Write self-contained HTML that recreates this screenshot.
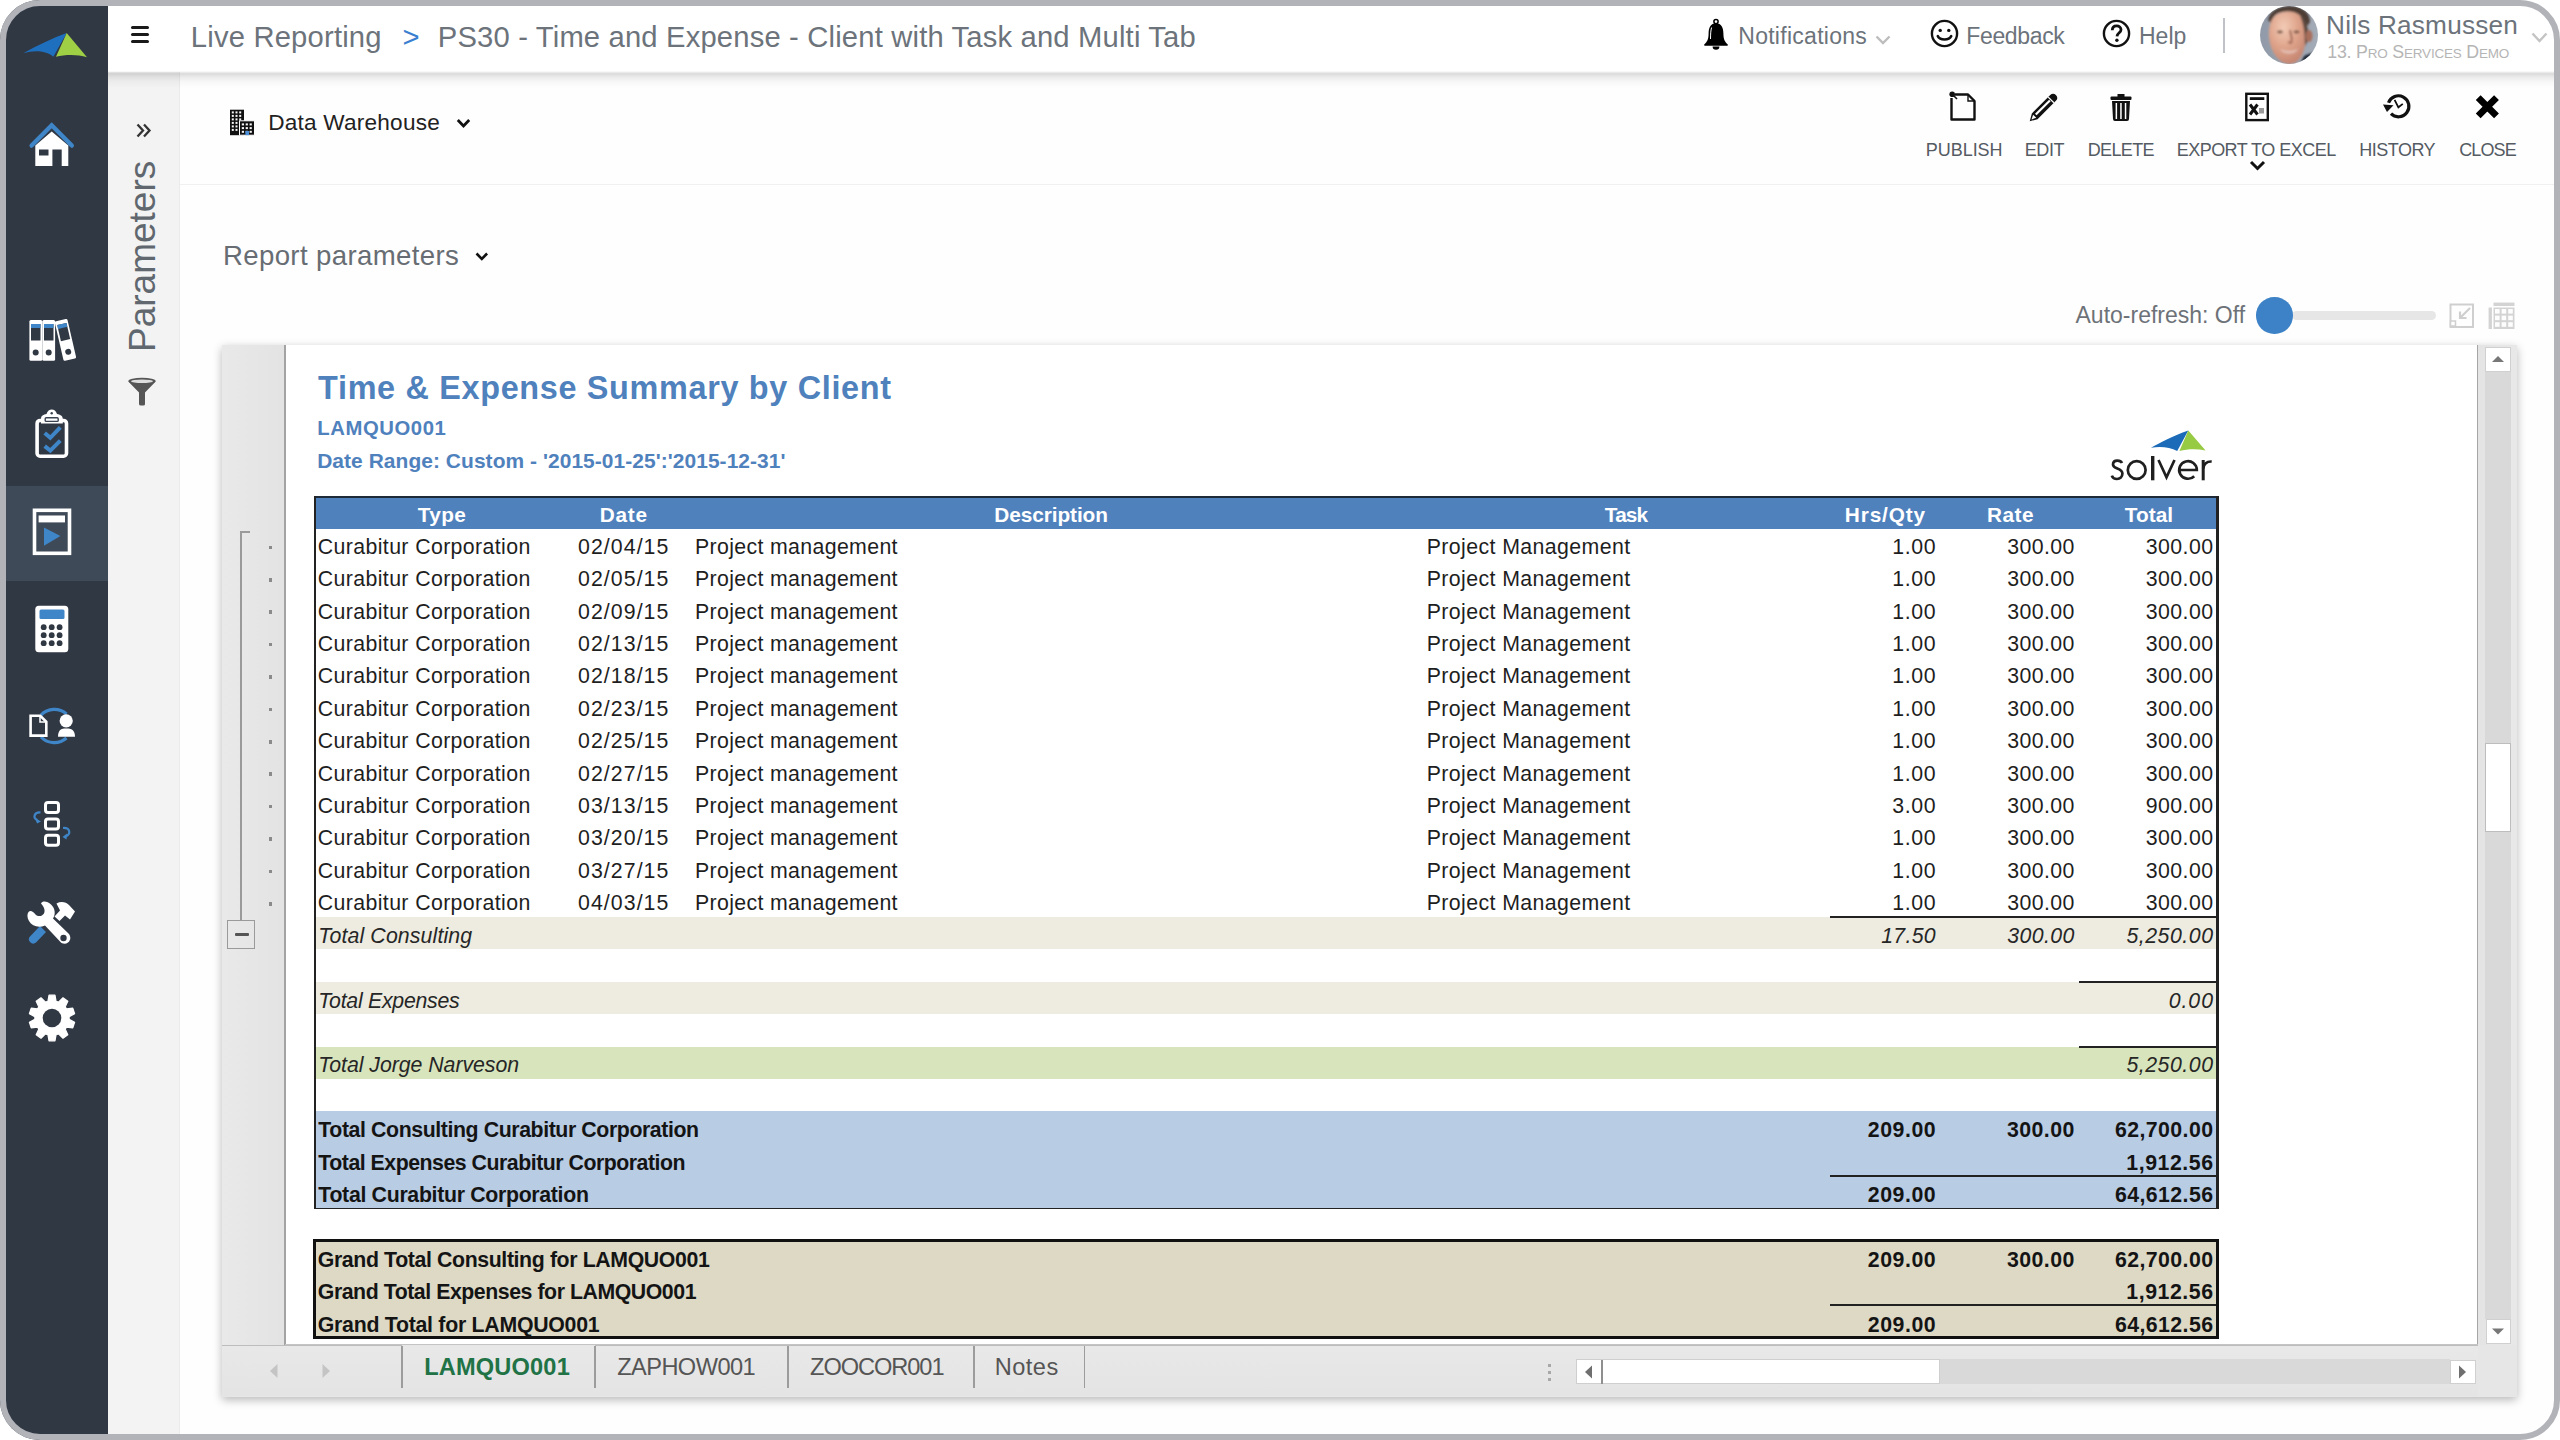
<!DOCTYPE html>
<html><head><meta charset="utf-8"><title>Live Reporting</title>
<style>
html,body{margin:0;padding:0;width:2560px;height:1440px;overflow:hidden;background:#ffffff;font-family:"Liberation Sans",sans-serif;}
#clip{position:absolute;left:0;top:0;width:2560px;height:1440px;border-radius:40px;overflow:hidden;}
#frame{position:absolute;left:0;top:0;width:2560px;height:1440px;box-sizing:border-box;border:6px solid #b1b3b8;border-radius:40px;pointer-events:none;}
svg{overflow:visible}
</style></head><body>
<div id="clip">
<div style="position:absolute;left:0.00px;top:0.00px;width:108.00px;height:1440.00px;background:#303844;"></div>
<div style="position:absolute;left:0.00px;top:486.00px;width:108.00px;height:95.00px;background:#3e4a57;"></div>
<div style="position:absolute;left:108.00px;top:0.00px;width:2452.00px;height:72.00px;background:#ffffff;"></div>
<div style="position:absolute;left:108.00px;top:72.00px;width:71.50px;height:1368.00px;background:#f3f3f3;"></div>
<div style="position:absolute;left:179.00px;top:72.00px;width:1.00px;height:1368.00px;background:#ebebeb;"></div>
<div style="position:absolute;left:180.00px;top:72.00px;width:2380.00px;height:1368.00px;background:#fefefe;"></div>
<div style="position:absolute;left:180.00px;top:183.50px;width:2380.00px;height:1.50px;background:#f0f0f0;"></div>
<div style="position:absolute;left:108.00px;top:71.00px;width:2452.00px;height:17.00px;background:linear-gradient(180deg,rgba(0,0,0,0) 0%,rgba(0,0,0,0.14) 16%,rgba(0,0,0,0.08) 35%,rgba(0,0,0,0.03) 60%,rgba(0,0,0,0) 100%);"></div>
<svg style="position:absolute;left:20px;top:28px;" width="72" height="34" viewBox="0 0 72 34"><path d="M3.3 25.3 C18 17 33 10 46.7 5 L33.3 28.7 C25 22 13 22.5 3.3 25.3 Z" fill="#1f6fbf"/><path d="M46.7 5 L67 29.2 C57 26 45 26.5 36 28.7 Z" fill="#9fcf45"/></svg>
<svg style="position:absolute;left:28px;top:120px;" width="48" height="50" viewBox="0 0 48 50"><path d="M3.6 25.6 L23.7 5.2 L43.8 25.6" fill="none" stroke="#3f86c8" stroke-width="4.3" stroke-linecap="round" stroke-linejoin="miter"/><path d="M7.3 25.5 L23.7 11.5 L40.3 25.5 V46 H33.7 V29.6 H24.4 V46 H7.3 Z M11 29.6 V35.5 H20.5 V29.6 Z" fill="#fff" fill-rule="evenodd"/></svg>
<svg style="position:absolute;left:28px;top:318px;" width="50" height="44" viewBox="0 0 50 44"><rect x="1.4" y="1.9" width="12.9" height="40.9" rx="1.5" fill="#fff"/><rect x="14.3" y="1.9" width="12.8" height="40.9" rx="1.5" fill="#fff"/>
<rect x="3" y="6" width="9.5" height="16.5" fill="#303844"/><rect x="3" y="6" width="9.5" height="4" fill="#3f86c8"/><circle cx="7.7" cy="34.5" r="3" fill="#303844"/>
<rect x="16" y="6" width="9.5" height="16.5" fill="#303844"/><rect x="16" y="6" width="9.5" height="4" fill="#3f86c8"/><circle cx="20.7" cy="34.5" r="3" fill="#303844"/>
<g transform="rotate(-13 38 22)"><rect x="31" y="1.5" width="13" height="40.5" rx="1.5" fill="#fff"/><rect x="32.8" y="5.5" width="9.5" height="16.5" fill="#303844"/><rect x="32.8" y="5.5" width="9.5" height="4" fill="#3f86c8"/><circle cx="37.5" cy="34" r="3" fill="#303844"/></g></svg>
<svg style="position:absolute;left:32px;top:406px;" width="40" height="55" viewBox="0 0 40 55"><rect x="5.1" y="14.5" width="29.4" height="35.7" rx="3" fill="none" stroke="#fff" stroke-width="3.6"/>
<path d="M9 17.5 V13 C9 9.5 11.5 8.5 14.5 8 C15.5 5 17.5 3.6 19.7 3.6 C22 3.6 24 5 25 8 C28 8.5 30.8 9.5 30.8 13 V17.5 Z" fill="#fff"/><rect x="13.2" y="11.8" width="13" height="3.6" rx="1" fill="none" stroke="#3a4350" stroke-width="1.4"/><circle cx="19.7" cy="7.3" r="1.2" fill="#3a4350"/>
<path d="M12.7 26.9 L18.3 31.8 L28.3 21.4" fill="none" stroke="#3f86c8" stroke-width="4"/>
<path d="M12.7 40.1 L18.3 44.6 L28.3 34.6" fill="none" stroke="#3f86c8" stroke-width="4"/></svg>
<svg style="position:absolute;left:30px;top:506px;" width="44" height="52" viewBox="0 0 44 52"><rect x="4.5" y="4.3" width="35" height="43" fill="none" stroke="#fff" stroke-width="3.6"/><rect x="8.6" y="9.5" width="26.4" height="6.9" fill="#fff"/><path d="M14 21.4 V39.7 L30.4 30 Z" fill="#3f86c8"/></svg>
<svg style="position:absolute;left:33px;top:603px;" width="38" height="52" viewBox="0 0 38 52"><rect x="2.3" y="2.7" width="33" height="46.5" rx="3.5" fill="#fff"/><rect x="6.5" y="6.5" width="25" height="9.4" rx="1.5" fill="#3f86c8"/><circle cx="10.7" cy="24.2" r="2.9" fill="#303844"/><circle cx="10.7" cy="32.2" r="2.9" fill="#303844"/><circle cx="10.7" cy="40.2" r="2.9" fill="#303844"/><circle cx="18.7" cy="24.2" r="2.9" fill="#303844"/><circle cx="18.7" cy="32.2" r="2.9" fill="#303844"/><circle cx="18.7" cy="40.2" r="2.9" fill="#303844"/><circle cx="26.6" cy="24.2" r="2.9" fill="#303844"/><circle cx="26.6" cy="32.2" r="2.9" fill="#303844"/><circle cx="26.6" cy="40.2" r="2.9" fill="#303844"/></svg>
<svg style="position:absolute;left:26px;top:703px;" width="54" height="46" viewBox="0 0 54 46"><path d="M15 12 A18.5 18.5 0 0 1 40.5 11" fill="none" stroke="#3f86c8" stroke-width="3.2"/><path d="M15 34 A18.5 18.5 0 0 0 40.5 35" fill="none" stroke="#3f86c8" stroke-width="3.2"/>
<path d="M4.6 12.8 H14.3 L20.3 18.8 V32.6 H4.6 Z" fill="none" stroke="#fff" stroke-width="2.6"/><path d="M14 13 V19 H20" fill="none" stroke="#fff" stroke-width="1.5"/>
<circle cx="40.2" cy="17.8" r="6.6" fill="#fff"/><path d="M32 33.8 C32 27 35 25.5 40.2 25.5 C45.5 25.5 49 27 49 33.8 Z" fill="#fff"/></svg>
<svg style="position:absolute;left:28px;top:798px;" width="50" height="52" viewBox="0 0 50 52"><rect x="17.5" y="4.5" width="13" height="10" rx="2.5" fill="none" stroke="#fff" stroke-width="3"/><rect x="17.5" y="21" width="13" height="10" rx="2.5" fill="none" stroke="#fff" stroke-width="3"/><rect x="17.5" y="37.2" width="13" height="10" rx="2.5" fill="none" stroke="#fff" stroke-width="3"/>
<path d="M12.5 14.5 C6 14 4.5 20 9.5 22" fill="none" stroke="#3f86c8" stroke-width="2.2"/><path d="M7 20 L13 23.5 L9 25.5 Z" fill="#3f86c8"/>
<path d="M35 30 C42 29.5 43.5 36 37.5 38.5" fill="none" stroke="#3f86c8" stroke-width="2.2"/><path d="M39 35.5 L34.5 39 L38.5 41.5 Z" fill="#3f86c8"/></svg>
<svg style="position:absolute;left:26px;top:897px;" width="52" height="48" viewBox="0 0 52 48"><path d="M4 39.5 L14 29 L20 35 L10 45.5 Q7 48 4 45 Q1.5 42 4 39.5 Z" fill="#3f86c8"/>
<path d="M2.5 15 C4.5 13 7 14.5 9.5 17.5 C12 20 16 19.5 18 16.5 C19.5 13.5 18 9.5 15 6.5 C17 3 22 5 25 7.5 C29 11 30 17 27 21.5 L42.5 36.5 C45 39 45 43.5 42 45.5 C39.5 47.5 36 47 34 44.5 L19 28.5 C13 31 6 29.5 3 24 C1 20.5 1 17 2.5 15 Z" fill="#fff"/>
<circle cx="37.5" cy="41" r="3.2" fill="#303844"/>
<path d="M30.5 6.5 C35 4 40 5 43 8 L49 14.5 L44 22.5 L39 18.5 L33.5 24 L28.5 19.5 L34 13.5 C33 11 31.5 9 30.5 6.5 Z" fill="#fff"/></svg>
<svg style="position:absolute;left:26px;top:992px;" width="52" height="52" viewBox="0 0 52 52"><polygon points="23.02,3.19 28.98,3.19 30.09,9.29 32.51,10.08 36.99,5.80 41.82,9.30 39.13,14.89 40.63,16.95 46.77,16.12 48.61,21.79 43.15,24.73 43.15,27.27 48.61,30.21 46.77,35.88 40.63,35.05 39.13,37.11 41.82,42.70 36.99,46.20 32.51,41.92 30.09,42.71 28.98,48.81 23.02,48.81 21.91,42.71 19.49,41.92 15.01,46.20 10.18,42.70 12.87,37.11 11.37,35.05 5.23,35.88 3.39,30.21 8.85,27.27 8.85,24.73 3.39,21.79 5.23,16.12 11.37,16.95 12.87,14.89 10.18,9.30 15.01,5.80 19.49,10.08 21.91,9.29" fill="#fff" stroke="#fff" stroke-width="1.2" stroke-linejoin="round"/><circle cx="26" cy="26" r="9.3" fill="#303844"/></svg>
<div style="position:absolute;left:130.60px;top:26.30px;width:18.20px;height:2.90px;background:#1a1a1a;border-radius:1.5px;"></div>
<div style="position:absolute;left:130.60px;top:33.10px;width:18.20px;height:2.90px;background:#1a1a1a;border-radius:1.5px;"></div>
<div style="position:absolute;left:130.60px;top:40.00px;width:18.20px;height:2.90px;background:#1a1a1a;border-radius:1.5px;"></div>
<div style="position:absolute;top:23.23px;font-size:29.2px;line-height:29.2px;color:#6c737b;font-weight:400;white-space:nowrap;letter-spacing:0.194px;left:190.81px;">Live Reporting</div>
<div style="position:absolute;top:23.23px;font-size:29.2px;line-height:29.2px;color:#3a7fd0;font-weight:400;white-space:nowrap;left:402.42px;">&gt;</div>
<div style="position:absolute;top:23.23px;font-size:29.2px;line-height:29.2px;color:#6c737b;font-weight:400;white-space:nowrap;letter-spacing:0.172px;left:437.81px;">PS30 - Time and Expense - Client with Task and Multi Tab</div>
<svg style="position:absolute;left:1703px;top:18px;" width="26" height="32" viewBox="0 0 26 32"><circle cx="13" cy="3.6" r="2.1" fill="none" stroke="#000" stroke-width="1.5"/><path d="M13 5.2 C7.6 5.2 5.6 9.8 5.6 15.5 C5.6 21.5 4.2 23.6 1.2 26.6 Q0.8 27.8 2 27.8 H24 Q25.2 27.8 24.8 26.6 C21.8 23.6 20.4 21.5 20.4 15.5 C20.4 9.8 18.4 5.2 13 5.2 Z" fill="#000"/><path d="M9.6 28.5 a3.4 3.2 0 0 0 6.8 0 Z" fill="#000"/><path d="M8.6 9.5 C7.6 12.5 7.6 17 7.5 21" stroke="#fff" stroke-width="1" fill="none"/></svg>
<div style="position:absolute;top:25.23px;font-size:23px;line-height:23px;color:#6c737b;font-weight:400;white-space:nowrap;letter-spacing:0.271px;left:1738.28px;">Notifications</div>
<svg style="position:absolute;left:1875px;top:35px;" width="16" height="10" viewBox="0 0 16 10"><path d="M1.5 1.5 L8 8 L14.5 1.5" fill="none" stroke="#bdbdbd" stroke-width="2.4"/></svg>
<svg style="position:absolute;left:1930px;top:19px;" width="29" height="29" viewBox="0 0 29 29"><circle cx="14.5" cy="14.5" r="12.6" fill="none" stroke="#111" stroke-width="2.4"/><circle cx="10.2" cy="11.4" r="1.7" fill="#111"/><circle cx="18.8" cy="11.4" r="1.7" fill="#111"/><path d="M7.8 17.2 C10 21.6 19 21.6 21.2 17.2" fill="none" stroke="#111" stroke-width="2.6" stroke-linecap="round"/></svg>
<div style="position:absolute;top:25.23px;font-size:23px;line-height:23px;color:#6c737b;font-weight:400;white-space:nowrap;letter-spacing:-0.354px;left:1966.28px;">Feedback</div>
<svg style="position:absolute;left:2102px;top:19px;" width="29" height="29" viewBox="0 0 29 29"><circle cx="14.5" cy="14.5" r="12.6" fill="none" stroke="#111" stroke-width="2.4"/><path d="M10.3 11.2 C10.3 8.3 12.2 6.9 14.6 6.9 C17.2 6.9 19 8.5 19 10.8 C19 13.6 15.4 14 15 17.3" fill="none" stroke="#111" stroke-width="2.8"/><circle cx="14.9" cy="21.3" r="1.7" fill="#111"/></svg>
<div style="position:absolute;top:25.23px;font-size:23px;line-height:23px;color:#6c737b;font-weight:400;white-space:nowrap;letter-spacing:0.075px;left:2138.88px;">Help</div>
<div style="position:absolute;left:2222.50px;top:18.00px;width:2.00px;height:35.00px;background:#bfc3c7;"></div>
<svg style="position:absolute;left:2260px;top:6px;" width="58" height="58" viewBox="0 0 58 58"><defs><clipPath id="av"><circle cx="29" cy="29" r="29"/></clipPath>
<radialGradient id="face" cx="40%" cy="30%" r="70%"><stop offset="0" stop-color="#f2cbb6"/><stop offset="0.55" stop-color="#dfa48b"/><stop offset="1" stop-color="#c68772"/></radialGradient>
<linearGradient id="bg" x1="0" y1="0" x2="1" y2="0"><stop offset="0" stop-color="#909aa8"/><stop offset="1" stop-color="#a3abb7"/></linearGradient>
<filter id="bl" x="-10%" y="-10%" width="120%" height="120%"><feGaussianBlur stdDeviation="0.9"/></filter></defs>
<g clip-path="url(#av)"><rect width="58" height="58" fill="url(#bg)"/><g filter="url(#bl)">
<path d="M8 14 C10 4 20 0 30 0 C42 0 50 6 50 16 L47 20 C44 10 36 5.5 27 5.5 C18 5.5 13 9 11 17 Z" fill="#4d3d35"/>
<path d="M9 30 C8 14 15 5.5 28 5.5 C39 5.5 46 12 46 28 C46 44 40 58 30 58 C19 58 10 46 9 30 Z" fill="url(#face)"/>
<path d="M40 10 C47 14 49 24 48 34 L45 40 C45 28 44 18 40 10 Z" fill="#5b473d"/>
<ellipse cx="49" cy="30" rx="3.5" ry="6" fill="#a86e5c"/>
<ellipse cx="20" cy="26" rx="3" ry="1.4" fill="#7d5a4b"/><ellipse cx="36.5" cy="26" rx="3" ry="1.4" fill="#7d5a4b"/>
<path d="M30 24 C31 30 33 35 31 37 L28 36" fill="none" stroke="#a8705d" stroke-width="2.2"/>
<path d="M20 43 C25 45.5 34 45.5 38.5 42.5 C36 46.5 33 47.5 29 47.5 C24.5 47.5 21.5 46 20 43 Z" fill="#e3bfb4"/>
<path d="M44 50 C48 48 54 46 58 47 V58 H40 Z" fill="#1f2734"/></g></g></svg>
<div style="position:absolute;top:12.27px;font-size:26.2px;line-height:26.2px;color:#6c737b;font-weight:400;white-space:nowrap;letter-spacing:0.201px;left:2326.03px;">Nils Rasmussen</div>
<div style="position:absolute;top:44.38px;font-size:17.8px;line-height:17.8px;color:#b5b5b5;font-weight:400;white-space:nowrap;letter-spacing:-0.200px;left:2327.20px;">13. P<span style="font-size:13.5px">RO</span> S<span style="font-size:13.5px">ERVICES</span> D<span style="font-size:13.5px">EMO</span></div>
<svg style="position:absolute;left:2531px;top:32px;" width="17" height="12" viewBox="0 0 17 12"><path d="M1.5 1.5 L8.5 9 L15.5 1.5" fill="none" stroke="#c4c4c4" stroke-width="2.4"/></svg>
<svg style="position:absolute;left:136px;top:123px;" width="16" height="15" viewBox="0 0 16 15"><path d="M1.5 1.5 L7 7.5 L1.5 13.5 M8 1.5 L13.5 7.5 L8 13.5" fill="none" stroke="#333" stroke-width="2.3"/></svg>
<div style="position:absolute;left:155px;top:351.5px;transform-origin:0 0;transform:rotate(-90deg);font-size:37px;line-height:37px;color:#60676e;white-space:nowrap;"><span style="position:relative;top:-31.3px">Parameters</span></div>
<svg style="position:absolute;left:127px;top:377px;" width="30" height="29" viewBox="0 0 30 29"><ellipse cx="15" cy="4" rx="13.7" ry="3.2" fill="#555"/><path d="M1.3 4.5 L12 15.5 V27 Q12 28.5 14 28.5 H16.5 Q18 28.5 18 27 V15.5 L28.7 4.5 Z" fill="#555"/><ellipse cx="15" cy="4.2" rx="11" ry="1.8" fill="#ddd"/></svg>
<svg style="position:absolute;left:229px;top:109px;" width="27" height="27" viewBox="0 0 27 27"><rect x="1" y="0.7" width="14" height="25.5" fill="#111"/><rect x="2.8" y="2.4" width="2" height="2" fill="#f8f8f8"/><rect x="2.8" y="5.9" width="2" height="2" fill="#f8f8f8"/><rect x="2.8" y="9.4" width="2" height="2" fill="#f8f8f8"/><rect x="2.8" y="12.9" width="2" height="2" fill="#f8f8f8"/><rect x="2.8" y="16.4" width="2" height="2" fill="#f8f8f8"/><rect x="2.8" y="19.9" width="2" height="2" fill="#f8f8f8"/><rect x="6.5" y="2.4" width="2" height="2" fill="#f8f8f8"/><rect x="6.5" y="5.9" width="2" height="2" fill="#f8f8f8"/><rect x="6.5" y="9.4" width="2" height="2" fill="#f8f8f8"/><rect x="6.5" y="12.9" width="2" height="2" fill="#f8f8f8"/><rect x="6.5" y="16.4" width="2" height="2" fill="#f8f8f8"/><rect x="6.5" y="19.9" width="2" height="2" fill="#f8f8f8"/><rect x="10.2" y="2.4" width="2" height="2" fill="#f8f8f8"/><rect x="10.2" y="5.9" width="2" height="2" fill="#f8f8f8"/><rect x="10.2" y="9.4" width="2" height="2" fill="#f8f8f8"/><rect x="10.2" y="12.9" width="2" height="2" fill="#f8f8f8"/><rect x="10.2" y="16.4" width="2" height="2" fill="#f8f8f8"/><rect x="10.2" y="19.9" width="2" height="2" fill="#f8f8f8"/><rect x="10.5" y="11.8" width="15" height="14.4" fill="#111" stroke="#fefefe" stroke-width="1"/><rect x="12.8" y="14.4" width="2.2" height="2" fill="#f8f8f8"/><rect x="12.8" y="18.1" width="2.2" height="2" fill="#f8f8f8"/><rect x="12.8" y="21.8" width="2.2" height="2" fill="#f8f8f8"/><rect x="16.7" y="14.4" width="2.2" height="2" fill="#f8f8f8"/><rect x="16.7" y="18.1" width="2.2" height="2" fill="#f8f8f8"/><rect x="16.7" y="21.8" width="2.2" height="2" fill="#f8f8f8"/><rect x="20.6" y="14.4" width="2.2" height="2" fill="#f8f8f8"/><rect x="20.6" y="18.1" width="2.2" height="2" fill="#f8f8f8"/><rect x="20.6" y="21.8" width="2.2" height="2" fill="#f8f8f8"/><rect x="16.4" y="22" width="3.6" height="4.2" fill="#4a8fd8"/></svg>
<div style="position:absolute;top:112.37px;font-size:22.6px;line-height:22.6px;color:#222;font-weight:400;white-space:nowrap;letter-spacing:0.210px;left:268.31px;">Data Warehouse</div>
<svg style="position:absolute;left:456px;top:118px;" width="15" height="11" viewBox="0 0 15 11"><path d="M1.8 2 L7.5 8 L13.2 2" fill="none" stroke="#111" stroke-width="2.8"/></svg>
<svg style="position:absolute;left:1948px;top:90px;" width="30" height="32" viewBox="0 0 30 32"><path d="M7 4.5 H20 L26.5 11 V29.5 H3.5 V8" fill="none" stroke="#111" stroke-width="2.4" stroke-linejoin="round"/><path d="M20 4.5 V11 H26.5" fill="none" stroke="#111" stroke-width="1.4"/><circle cx="4.2" cy="4.3" r="2.8" fill="#111"/><path d="M4.5 4.5 L9 9" stroke="#111" stroke-width="1.6"/></svg>
<div style="position:absolute;top:141.06px;font-size:18px;line-height:18px;color:#545b63;font-weight:400;white-space:nowrap;letter-spacing:-0.008px;left:1925.65px;">PUBLISH</div>
<svg style="position:absolute;left:2031px;top:90px;" width="30" height="30" viewBox="0 0 30 30"><g transform="rotate(-45 15 15)"><path d="M-1 11 H25 Q29 11 29 15 Q29 19 25 19 H-1 L-8 15 Z" fill="#111"/><rect x="1" y="13.4" width="20" height="2.2" fill="#fff"/><path d="M-5.5 15 L-1 12.8 V17.2 Z" fill="#fff"/><rect x="21.5" y="11" width="1.3" height="8" fill="#fff"/></g></svg>
<div style="position:absolute;top:141.06px;font-size:18px;line-height:18px;color:#545b63;font-weight:400;white-space:nowrap;letter-spacing:-0.341px;left:2024.65px;">EDIT</div>
<svg style="position:absolute;left:2109px;top:93px;" width="24" height="29" viewBox="0 0 24 29"><rect x="1.5" y="3.5" width="21" height="3.4" rx="1" fill="#111"/><rect x="8.5" y="1" width="7" height="3" fill="#111"/><path d="M3 8 H21 L20 26 Q20 28 18 28 H6 Q4 28 4 26 Z" fill="#111"/><g fill="#fff"><rect x="6.6" y="10" width="1.5" height="16"/><rect x="11.2" y="10" width="1.5" height="16"/><rect x="15.8" y="10" width="1.5" height="16"/></g></svg>
<div style="position:absolute;top:141.06px;font-size:18px;line-height:18px;color:#545b63;font-weight:400;white-space:nowrap;letter-spacing:-0.609px;left:2087.65px;">DELETE</div>
<svg style="position:absolute;left:2243px;top:91px;" width="28" height="31" viewBox="0 0 28 31"><rect x="3.3" y="2.8" width="21.5" height="26.3" fill="none" stroke="#111" stroke-width="2.4"/><rect x="6.8" y="6.2" width="14.5" height="2.8" fill="#111"/><path d="M7 13.5 L14.5 23.5 M14.5 13.5 L7 23.5" stroke="#111" stroke-width="3"/><rect x="16" y="17" width="5" height="5.5" fill="#999"/></svg>
<div style="position:absolute;top:141.06px;font-size:18px;line-height:18px;color:#545b63;font-weight:400;white-space:nowrap;letter-spacing:-0.511px;left:2176.65px;">EXPORT TO EXCEL</div>
<svg style="position:absolute;left:2249px;top:160px;" width="17" height="12" viewBox="0 0 17 12"><path d="M2 2 L8.5 8.5 L15 2" fill="none" stroke="#111" stroke-width="3"/></svg>
<svg style="position:absolute;left:2383px;top:92px;" width="30" height="30" viewBox="0 0 30 30"><path d="M7.98 21.72 A10.5 10.5 0 1 0 5.53 10.71" fill="none" stroke="#111" stroke-width="3.2"/><path d="M0 12.6 L10.5 13.2 L4 20 Z" fill="#111"/><path d="M11.6 7.8 L15.4 15.3 L19.8 11.9" fill="none" stroke="#111" stroke-width="1.8"/></svg>
<div style="position:absolute;top:141.06px;font-size:18px;line-height:18px;color:#545b63;font-weight:400;white-space:nowrap;letter-spacing:-0.496px;left:2359.25px;">HISTORY</div>
<svg style="position:absolute;left:2473px;top:92px;" width="28" height="28" viewBox="0 0 28 28"><path d="M5.2 5.6 L23.5 23.9 M23.5 5.6 L5.2 23.9" stroke="#000" stroke-width="6.8"/></svg>
<div style="position:absolute;top:141.06px;font-size:18px;line-height:18px;color:#545b63;font-weight:400;white-space:nowrap;letter-spacing:-0.861px;left:2459.19px;">CLOSE</div>
<div style="position:absolute;top:241.74px;font-size:27.6px;line-height:27.6px;color:#676d73;font-weight:400;white-space:nowrap;letter-spacing:0.371px;left:222.93px;">Report parameters</div>
<svg style="position:absolute;left:475px;top:252px;" width="14" height="9" viewBox="0 0 14 9"><path d="M1.5 1.5 L6.8 6.8 L12.1 1.5" fill="none" stroke="#111" stroke-width="2.6"/></svg>
<div style="position:absolute;top:303.73px;font-size:23px;line-height:23px;color:#6d7278;font-weight:400;white-space:nowrap;letter-spacing:-0.004px;left:2075.54px;">Auto-refresh: Off</div>
<div style="position:absolute;left:2292.00px;top:311.00px;width:144.00px;height:9.00px;background:#e6e6e6;border-radius:5px;"></div>
<div style="position:absolute;left:2256.00px;top:297.00px;width:36.50px;height:36.50px;background:#3d82c6;border-radius:50%;"></div>
<svg style="position:absolute;left:2449px;top:303px;" width="26" height="26" viewBox="0 0 26 26"><rect x="1.5" y="1.5" width="22.5" height="22.5" fill="none" stroke="#cfcfcf" stroke-width="2"/><rect x="1.5" y="18" width="5" height="5" fill="#fdfdfd" stroke="#cfcfcf" stroke-width="1.5"/><path d="M21 5 L11 15 M11 8.5 V15 H17.5" fill="none" stroke="#cfcfcf" stroke-width="2.2"/></svg>
<svg style="position:absolute;left:2488px;top:302px;" width="27" height="28" viewBox="0 0 27 28"><g fill="#d3d3d3"><rect x="0.6" y="5.5" width="3.3" height="21.5"/><rect x="5.5" y="0.6" width="21" height="3.4"/><rect x="5.5" y="5.5" width="21" height="21.5"/></g><g fill="#fdfdfd"><rect x="7.0" y="7.0" width="4.6" height="4.6"/><rect x="7.0" y="13.6" width="4.6" height="4.6"/><rect x="7.0" y="20.2" width="4.6" height="4.6"/><rect x="13.6" y="7.0" width="4.6" height="4.6"/><rect x="13.6" y="13.6" width="4.6" height="4.6"/><rect x="13.6" y="20.2" width="4.6" height="4.6"/><rect x="20.2" y="7.0" width="4.6" height="4.6"/><rect x="20.2" y="13.6" width="4.6" height="4.6"/><rect x="20.2" y="20.2" width="4.6" height="4.6"/></g></svg>
<div style="position:absolute;left:222.00px;top:345.00px;width:2295.00px;height:1052.00px;background:#e6e6e6;box-shadow:0 3px 9px rgba(0,0,0,0.28);"></div>
<div style="position:absolute;left:222.00px;top:345.00px;width:62.00px;height:1000.00px;background:linear-gradient(90deg,#e9e9e9,#e3e3e3);"></div>
<div style="position:absolute;left:284.00px;top:345.00px;width:1.50px;height:1000.00px;background:#a3a3a3;"></div>
<div style="position:absolute;left:285.50px;top:345.00px;width:2191.50px;height:999.50px;background:#ffffff;"></div>
<div style="position:absolute;left:2477.00px;top:345.00px;width:1.00px;height:1000.00px;background:#a6a6a6;"></div>
<div style="position:absolute;left:285.00px;top:1344.20px;width:2193.00px;height:1.00px;background:#c4c4c4;"></div>
<div style="position:absolute;left:2478.00px;top:345.00px;width:39.00px;height:1000.00px;background:linear-gradient(90deg,#e4e4e4,#e8e8e8);"></div>
<div style="position:absolute;left:2485.00px;top:372.00px;width:25.60px;height:946.70px;background:#d9d9d9;"></div>
<div style="position:absolute;left:2485.00px;top:347.00px;width:26.00px;height:25.00px;background:#fff;border:1px solid #d0d0d0;box-sizing:border-box;"></div>
<svg style="position:absolute;left:2490px;top:353px;" width="16" height="12" viewBox="0 0 16 12"><path d="M2 9 L8 3 L14 9 Z" fill="#777"/></svg>
<div style="position:absolute;left:2485.50px;top:1318.70px;width:25.00px;height:25.30px;background:#fff;border:1px solid #d0d0d0;box-sizing:border-box;"></div>
<svg style="position:absolute;left:2490px;top:1326px;" width="16" height="12" viewBox="0 0 16 12"><path d="M2 2.5 L8 8.5 L14 2.5 Z" fill="#777"/></svg>
<div style="position:absolute;left:2485.00px;top:743.00px;width:25.60px;height:89.00px;background:#fff;border:1px solid #bdbdbd;box-sizing:border-box;"></div>
<div style="position:absolute;left:222.00px;top:1345.60px;width:2256.00px;height:50.90px;background:linear-gradient(180deg,#e8e8e8,#e4e4e4);"></div>
<div style="position:absolute;left:222.00px;top:1345.00px;width:179.50px;height:1.20px;background:#bdbdbd;"></div>
<div style="position:absolute;left:595.00px;top:1345.00px;width:1883.00px;height:1.20px;background:#bdbdbd;"></div>
<svg style="position:absolute;left:268px;top:1362px;" width="12" height="18" viewBox="0 0 12 18"><path d="M9.5 2 L2 9 L9.5 16 Z" fill="#c4c4c4"/></svg>
<svg style="position:absolute;left:320px;top:1362px;" width="12" height="18" viewBox="0 0 12 18"><path d="M2.5 2 L10 9 L2.5 16 Z" fill="#c4c4c4"/></svg>
<div style="position:absolute;left:401.30px;top:1346.00px;width:1.60px;height:42.00px;background:#9c9c9c;"></div>
<div style="position:absolute;left:594.00px;top:1346.00px;width:1.60px;height:42.00px;background:#9c9c9c;"></div>
<div style="position:absolute;left:787.00px;top:1346.00px;width:1.60px;height:42.00px;background:#9c9c9c;"></div>
<div style="position:absolute;left:973.00px;top:1346.00px;width:1.60px;height:42.00px;background:#9c9c9c;"></div>
<div style="position:absolute;left:1083.50px;top:1346.00px;width:1.60px;height:42.00px;background:#9c9c9c;"></div>
<div style="position:absolute;top:1356.32px;font-size:23.6px;line-height:23.6px;color:#217346;font-weight:700;white-space:nowrap;letter-spacing:0.168px;left:424.23px;">LAMQUO001</div>
<div style="position:absolute;top:1356.32px;font-size:23.6px;line-height:23.6px;color:#555;font-weight:400;white-space:nowrap;letter-spacing:-0.544px;left:617.13px;">ZAPHOW001</div>
<div style="position:absolute;top:1356.32px;font-size:23.6px;line-height:23.6px;color:#555;font-weight:400;white-space:nowrap;letter-spacing:-1.044px;left:810.03px;">ZOOCOR001</div>
<div style="position:absolute;top:1356.32px;font-size:23.6px;line-height:23.6px;color:#555;font-weight:400;white-space:nowrap;letter-spacing:0.486px;left:994.63px;">Notes</div>
<div style="position:absolute;left:1547.50px;top:1364.30px;width:3.00px;height:3.00px;background:#a8a8a8;"></div>
<div style="position:absolute;left:1547.50px;top:1371.30px;width:3.00px;height:3.00px;background:#a8a8a8;"></div>
<div style="position:absolute;left:1547.50px;top:1378.30px;width:3.00px;height:3.00px;background:#a8a8a8;"></div>
<div style="position:absolute;left:1601.60px;top:1359.00px;width:848.80px;height:25.40px;background:#d9d9d9;"></div>
<div style="position:absolute;left:1576.00px;top:1359.00px;width:364.00px;height:25.40px;background:#fff;border:1px solid #cfcfcf;box-sizing:border-box;"></div>
<div style="position:absolute;left:1601.00px;top:1360.00px;width:1.50px;height:24.00px;background:#8f8f8f;"></div>
<svg style="position:absolute;left:1581px;top:1363px;" width="14" height="18" viewBox="0 0 14 18"><path d="M11 2.5 L4 9 L11 15.5 Z" fill="#6f6f6f"/></svg>
<div style="position:absolute;left:2450.40px;top:1359.50px;width:25.60px;height:24.90px;background:#fff;border:1px solid #d0d0d0;box-sizing:border-box;"></div>
<svg style="position:absolute;left:2456px;top:1363px;" width="14" height="18" viewBox="0 0 14 18"><path d="M3 2.5 L10 9 L3 15.5 Z" fill="#6f6f6f"/></svg>
<div style="position:absolute;top:371.97px;font-size:32.4px;line-height:32.4px;color:#4f81bd;font-weight:700;white-space:nowrap;letter-spacing:0.673px;left:318.10px;">Time &amp; Expense Summary by Client</div>
<div style="position:absolute;top:418.02px;font-size:20.3px;line-height:20.3px;color:#4f81bd;font-weight:700;white-space:nowrap;letter-spacing:0.582px;left:317.23px;">LAMQUO001</div>
<div style="position:absolute;top:450.77px;font-size:20.95px;line-height:20.95px;color:#4f81bd;font-weight:700;white-space:nowrap;letter-spacing:0.060px;left:317.18px;">Date Range: Custom - '2015-01-25':'2015-12-31'</div>
<svg style="position:absolute;left:2145px;top:426px;" width="66" height="30" viewBox="0 0 66 30"><path d="M6 21.8 C15 17 28 10 43.3 4.6 L32.2 25 C25 21 15 20 6 21.8 Z" fill="#1b6bb8"/><path d="M43.3 4.6 L60.6 24.6 C52 22.5 43 22.8 34.4 25 Z" fill="#98cb44"/></svg>
<svg style="position:absolute;left:2108px;top:452px;" width="108" height="32" viewBox="0 0 108 32"><g fill="none" stroke="#1f1f1f" stroke-width="2.7"><path d="M14 11 C13 9 11.3 8.6 9.4 8.6 C6.6 8.6 5 10.3 5 12.5 C5 17.6 14.4 15.4 14.4 21.6 C14.4 25 12 27 9 27 C6.5 27 4.6 25.8 3.8 23.6"/><circle cx="28.7" cy="18" r="8.9"/><path d="M50.5 8 L58.5 25.2 L66.5 8"/><path d="M71.3 18 H88.8 A8.8 8.8 0 1 0 86.2 24.2"/><path d="M95.2 16.5 C96 11.5 99 9.3 103.7 9.5"/></g><rect x="43" y="4" width="3.4" height="24.3" fill="#1f1f1f"/><rect x="93.7" y="8" width="3" height="20.3" fill="#1f1f1f"/></svg>
<div style="position:absolute;left:239.80px;top:531.70px;width:2.00px;height:388.30px;background:#9a9a9a;"></div>
<div style="position:absolute;left:239.80px;top:531.00px;width:10.70px;height:2.00px;background:#9a9a9a;"></div>
<div style="position:absolute;left:226.60px;top:920.00px;width:28.80px;height:29.00px;border:1.6px solid #9a9a9a;box-sizing:border-box;"></div>
<div style="position:absolute;left:234.60px;top:932.60px;width:14.60px;height:3.60px;background:#555;border-radius:1px;"></div>
<div style="position:absolute;left:269.00px;top:545.50px;width:3.40px;height:3.60px;background:#8a8a8a;"></div>
<div style="position:absolute;left:269.00px;top:577.92px;width:3.40px;height:3.60px;background:#8a8a8a;"></div>
<div style="position:absolute;left:269.00px;top:610.34px;width:3.40px;height:3.60px;background:#8a8a8a;"></div>
<div style="position:absolute;left:269.00px;top:642.76px;width:3.40px;height:3.60px;background:#8a8a8a;"></div>
<div style="position:absolute;left:269.00px;top:675.18px;width:3.40px;height:3.60px;background:#8a8a8a;"></div>
<div style="position:absolute;left:269.00px;top:707.60px;width:3.40px;height:3.60px;background:#8a8a8a;"></div>
<div style="position:absolute;left:269.00px;top:740.02px;width:3.40px;height:3.60px;background:#8a8a8a;"></div>
<div style="position:absolute;left:269.00px;top:772.44px;width:3.40px;height:3.60px;background:#8a8a8a;"></div>
<div style="position:absolute;left:269.00px;top:804.86px;width:3.40px;height:3.60px;background:#8a8a8a;"></div>
<div style="position:absolute;left:269.00px;top:837.28px;width:3.40px;height:3.60px;background:#8a8a8a;"></div>
<div style="position:absolute;left:269.00px;top:869.70px;width:3.40px;height:3.60px;background:#8a8a8a;"></div>
<div style="position:absolute;left:269.00px;top:902.12px;width:3.40px;height:3.60px;background:#8a8a8a;"></div>
<div style="position:absolute;left:314.00px;top:495.50px;width:1904.50px;height:33.50px;background:#4f81bd;"></div>
<div style="position:absolute;left:314.00px;top:495.50px;width:1904.50px;height:2.50px;background:#1f2a38;"></div>
<div style="position:absolute;top:505.09px;font-size:20.8px;line-height:20.8px;color:#fff;font-weight:700;white-space:nowrap;letter-spacing:0.428px;left:-558.20px;width:2000px;text-align:center;text-indent:0.428px;">Type</div>
<div style="position:absolute;top:505.09px;font-size:20.8px;line-height:20.8px;color:#fff;font-weight:700;white-space:nowrap;letter-spacing:0.801px;left:-376.60px;width:2000px;text-align:center;text-indent:0.801px;">Date</div>
<div style="position:absolute;top:505.09px;font-size:20.8px;line-height:20.8px;color:#fff;font-weight:700;white-space:nowrap;letter-spacing:-0.073px;left:51.10px;width:2000px;text-align:center;text-indent:-0.073px;">Description</div>
<div style="position:absolute;top:505.09px;font-size:20.8px;line-height:20.8px;color:#fff;font-weight:700;white-space:nowrap;letter-spacing:-0.860px;left:626.50px;width:2000px;text-align:center;text-indent:-0.860px;">Task</div>
<div style="position:absolute;top:505.09px;font-size:20.8px;line-height:20.8px;color:#fff;font-weight:700;white-space:nowrap;letter-spacing:0.859px;left:885.00px;width:2000px;text-align:center;text-indent:0.859px;">Hrs/Qty</div>
<div style="position:absolute;top:505.09px;font-size:20.8px;line-height:20.8px;color:#fff;font-weight:700;white-space:nowrap;letter-spacing:0.568px;left:1010.30px;width:2000px;text-align:center;text-indent:0.568px;">Rate</div>
<div style="position:absolute;top:505.09px;font-size:20.8px;line-height:20.8px;color:#fff;font-weight:700;white-space:nowrap;letter-spacing:0.036px;left:1149.00px;width:2000px;text-align:center;text-indent:0.036px;">Total</div>
<div style="position:absolute;left:314.00px;top:495.50px;width:2.40px;height:713.90px;background:#222;"></div>
<div style="position:absolute;left:2216.00px;top:495.50px;width:2.50px;height:713.90px;background:#222;"></div>
<div style="position:absolute;top:536.67px;font-size:21.3px;line-height:21.3px;color:#1e1e1e;font-weight:400;white-space:nowrap;letter-spacing:0.386px;left:317.79px;">Curabitur Corporation</div>
<div style="position:absolute;top:536.67px;font-size:21.3px;line-height:21.3px;color:#1e1e1e;font-weight:400;white-space:nowrap;letter-spacing:1.061px;left:578.04px;">02/04/15</div>
<div style="position:absolute;top:536.67px;font-size:21.3px;line-height:21.3px;color:#1e1e1e;font-weight:400;white-space:nowrap;letter-spacing:0.353px;left:695.00px;">Project management</div>
<div style="position:absolute;top:536.67px;font-size:21.3px;line-height:21.3px;color:#1e1e1e;font-weight:400;white-space:nowrap;letter-spacing:0.412px;left:1426.70px;">Project Management</div>
<div style="position:absolute;top:536.67px;font-size:21.3px;line-height:21.3px;color:#1e1e1e;font-weight:400;white-space:nowrap;letter-spacing:0.662px;right:624.30px;margin-right:-0.662px;">1.00</div>
<div style="position:absolute;top:536.67px;font-size:21.3px;line-height:21.3px;color:#1e1e1e;font-weight:400;white-space:nowrap;letter-spacing:0.399px;right:485.70px;margin-right:-0.399px;">300.00</div>
<div style="position:absolute;top:536.67px;font-size:21.3px;line-height:21.3px;color:#1e1e1e;font-weight:400;white-space:nowrap;letter-spacing:0.399px;right:347.00px;margin-right:-0.399px;">300.00</div>
<div style="position:absolute;top:569.09px;font-size:21.3px;line-height:21.3px;color:#1e1e1e;font-weight:400;white-space:nowrap;letter-spacing:0.386px;left:317.79px;">Curabitur Corporation</div>
<div style="position:absolute;top:569.09px;font-size:21.3px;line-height:21.3px;color:#1e1e1e;font-weight:400;white-space:nowrap;letter-spacing:1.061px;left:578.04px;">02/05/15</div>
<div style="position:absolute;top:569.09px;font-size:21.3px;line-height:21.3px;color:#1e1e1e;font-weight:400;white-space:nowrap;letter-spacing:0.353px;left:695.00px;">Project management</div>
<div style="position:absolute;top:569.09px;font-size:21.3px;line-height:21.3px;color:#1e1e1e;font-weight:400;white-space:nowrap;letter-spacing:0.412px;left:1426.70px;">Project Management</div>
<div style="position:absolute;top:569.09px;font-size:21.3px;line-height:21.3px;color:#1e1e1e;font-weight:400;white-space:nowrap;letter-spacing:0.662px;right:624.30px;margin-right:-0.662px;">1.00</div>
<div style="position:absolute;top:569.09px;font-size:21.3px;line-height:21.3px;color:#1e1e1e;font-weight:400;white-space:nowrap;letter-spacing:0.399px;right:485.70px;margin-right:-0.399px;">300.00</div>
<div style="position:absolute;top:569.09px;font-size:21.3px;line-height:21.3px;color:#1e1e1e;font-weight:400;white-space:nowrap;letter-spacing:0.399px;right:347.00px;margin-right:-0.399px;">300.00</div>
<div style="position:absolute;top:601.51px;font-size:21.3px;line-height:21.3px;color:#1e1e1e;font-weight:400;white-space:nowrap;letter-spacing:0.386px;left:317.79px;">Curabitur Corporation</div>
<div style="position:absolute;top:601.51px;font-size:21.3px;line-height:21.3px;color:#1e1e1e;font-weight:400;white-space:nowrap;letter-spacing:1.061px;left:578.04px;">02/09/15</div>
<div style="position:absolute;top:601.51px;font-size:21.3px;line-height:21.3px;color:#1e1e1e;font-weight:400;white-space:nowrap;letter-spacing:0.353px;left:695.00px;">Project management</div>
<div style="position:absolute;top:601.51px;font-size:21.3px;line-height:21.3px;color:#1e1e1e;font-weight:400;white-space:nowrap;letter-spacing:0.412px;left:1426.70px;">Project Management</div>
<div style="position:absolute;top:601.51px;font-size:21.3px;line-height:21.3px;color:#1e1e1e;font-weight:400;white-space:nowrap;letter-spacing:0.662px;right:624.30px;margin-right:-0.662px;">1.00</div>
<div style="position:absolute;top:601.51px;font-size:21.3px;line-height:21.3px;color:#1e1e1e;font-weight:400;white-space:nowrap;letter-spacing:0.399px;right:485.70px;margin-right:-0.399px;">300.00</div>
<div style="position:absolute;top:601.51px;font-size:21.3px;line-height:21.3px;color:#1e1e1e;font-weight:400;white-space:nowrap;letter-spacing:0.399px;right:347.00px;margin-right:-0.399px;">300.00</div>
<div style="position:absolute;top:633.93px;font-size:21.3px;line-height:21.3px;color:#1e1e1e;font-weight:400;white-space:nowrap;letter-spacing:0.386px;left:317.79px;">Curabitur Corporation</div>
<div style="position:absolute;top:633.93px;font-size:21.3px;line-height:21.3px;color:#1e1e1e;font-weight:400;white-space:nowrap;letter-spacing:1.061px;left:578.04px;">02/13/15</div>
<div style="position:absolute;top:633.93px;font-size:21.3px;line-height:21.3px;color:#1e1e1e;font-weight:400;white-space:nowrap;letter-spacing:0.353px;left:695.00px;">Project management</div>
<div style="position:absolute;top:633.93px;font-size:21.3px;line-height:21.3px;color:#1e1e1e;font-weight:400;white-space:nowrap;letter-spacing:0.412px;left:1426.70px;">Project Management</div>
<div style="position:absolute;top:633.93px;font-size:21.3px;line-height:21.3px;color:#1e1e1e;font-weight:400;white-space:nowrap;letter-spacing:0.662px;right:624.30px;margin-right:-0.662px;">1.00</div>
<div style="position:absolute;top:633.93px;font-size:21.3px;line-height:21.3px;color:#1e1e1e;font-weight:400;white-space:nowrap;letter-spacing:0.399px;right:485.70px;margin-right:-0.399px;">300.00</div>
<div style="position:absolute;top:633.93px;font-size:21.3px;line-height:21.3px;color:#1e1e1e;font-weight:400;white-space:nowrap;letter-spacing:0.399px;right:347.00px;margin-right:-0.399px;">300.00</div>
<div style="position:absolute;top:666.35px;font-size:21.3px;line-height:21.3px;color:#1e1e1e;font-weight:400;white-space:nowrap;letter-spacing:0.386px;left:317.79px;">Curabitur Corporation</div>
<div style="position:absolute;top:666.35px;font-size:21.3px;line-height:21.3px;color:#1e1e1e;font-weight:400;white-space:nowrap;letter-spacing:1.061px;left:578.04px;">02/18/15</div>
<div style="position:absolute;top:666.35px;font-size:21.3px;line-height:21.3px;color:#1e1e1e;font-weight:400;white-space:nowrap;letter-spacing:0.353px;left:695.00px;">Project management</div>
<div style="position:absolute;top:666.35px;font-size:21.3px;line-height:21.3px;color:#1e1e1e;font-weight:400;white-space:nowrap;letter-spacing:0.412px;left:1426.70px;">Project Management</div>
<div style="position:absolute;top:666.35px;font-size:21.3px;line-height:21.3px;color:#1e1e1e;font-weight:400;white-space:nowrap;letter-spacing:0.662px;right:624.30px;margin-right:-0.662px;">1.00</div>
<div style="position:absolute;top:666.35px;font-size:21.3px;line-height:21.3px;color:#1e1e1e;font-weight:400;white-space:nowrap;letter-spacing:0.399px;right:485.70px;margin-right:-0.399px;">300.00</div>
<div style="position:absolute;top:666.35px;font-size:21.3px;line-height:21.3px;color:#1e1e1e;font-weight:400;white-space:nowrap;letter-spacing:0.399px;right:347.00px;margin-right:-0.399px;">300.00</div>
<div style="position:absolute;top:698.77px;font-size:21.3px;line-height:21.3px;color:#1e1e1e;font-weight:400;white-space:nowrap;letter-spacing:0.386px;left:317.79px;">Curabitur Corporation</div>
<div style="position:absolute;top:698.77px;font-size:21.3px;line-height:21.3px;color:#1e1e1e;font-weight:400;white-space:nowrap;letter-spacing:1.061px;left:578.04px;">02/23/15</div>
<div style="position:absolute;top:698.77px;font-size:21.3px;line-height:21.3px;color:#1e1e1e;font-weight:400;white-space:nowrap;letter-spacing:0.353px;left:695.00px;">Project management</div>
<div style="position:absolute;top:698.77px;font-size:21.3px;line-height:21.3px;color:#1e1e1e;font-weight:400;white-space:nowrap;letter-spacing:0.412px;left:1426.70px;">Project Management</div>
<div style="position:absolute;top:698.77px;font-size:21.3px;line-height:21.3px;color:#1e1e1e;font-weight:400;white-space:nowrap;letter-spacing:0.662px;right:624.30px;margin-right:-0.662px;">1.00</div>
<div style="position:absolute;top:698.77px;font-size:21.3px;line-height:21.3px;color:#1e1e1e;font-weight:400;white-space:nowrap;letter-spacing:0.399px;right:485.70px;margin-right:-0.399px;">300.00</div>
<div style="position:absolute;top:698.77px;font-size:21.3px;line-height:21.3px;color:#1e1e1e;font-weight:400;white-space:nowrap;letter-spacing:0.399px;right:347.00px;margin-right:-0.399px;">300.00</div>
<div style="position:absolute;top:731.19px;font-size:21.3px;line-height:21.3px;color:#1e1e1e;font-weight:400;white-space:nowrap;letter-spacing:0.386px;left:317.79px;">Curabitur Corporation</div>
<div style="position:absolute;top:731.19px;font-size:21.3px;line-height:21.3px;color:#1e1e1e;font-weight:400;white-space:nowrap;letter-spacing:1.061px;left:578.04px;">02/25/15</div>
<div style="position:absolute;top:731.19px;font-size:21.3px;line-height:21.3px;color:#1e1e1e;font-weight:400;white-space:nowrap;letter-spacing:0.353px;left:695.00px;">Project management</div>
<div style="position:absolute;top:731.19px;font-size:21.3px;line-height:21.3px;color:#1e1e1e;font-weight:400;white-space:nowrap;letter-spacing:0.412px;left:1426.70px;">Project Management</div>
<div style="position:absolute;top:731.19px;font-size:21.3px;line-height:21.3px;color:#1e1e1e;font-weight:400;white-space:nowrap;letter-spacing:0.662px;right:624.30px;margin-right:-0.662px;">1.00</div>
<div style="position:absolute;top:731.19px;font-size:21.3px;line-height:21.3px;color:#1e1e1e;font-weight:400;white-space:nowrap;letter-spacing:0.399px;right:485.70px;margin-right:-0.399px;">300.00</div>
<div style="position:absolute;top:731.19px;font-size:21.3px;line-height:21.3px;color:#1e1e1e;font-weight:400;white-space:nowrap;letter-spacing:0.399px;right:347.00px;margin-right:-0.399px;">300.00</div>
<div style="position:absolute;top:763.61px;font-size:21.3px;line-height:21.3px;color:#1e1e1e;font-weight:400;white-space:nowrap;letter-spacing:0.386px;left:317.79px;">Curabitur Corporation</div>
<div style="position:absolute;top:763.61px;font-size:21.3px;line-height:21.3px;color:#1e1e1e;font-weight:400;white-space:nowrap;letter-spacing:1.061px;left:578.04px;">02/27/15</div>
<div style="position:absolute;top:763.61px;font-size:21.3px;line-height:21.3px;color:#1e1e1e;font-weight:400;white-space:nowrap;letter-spacing:0.353px;left:695.00px;">Project management</div>
<div style="position:absolute;top:763.61px;font-size:21.3px;line-height:21.3px;color:#1e1e1e;font-weight:400;white-space:nowrap;letter-spacing:0.412px;left:1426.70px;">Project Management</div>
<div style="position:absolute;top:763.61px;font-size:21.3px;line-height:21.3px;color:#1e1e1e;font-weight:400;white-space:nowrap;letter-spacing:0.662px;right:624.30px;margin-right:-0.662px;">1.00</div>
<div style="position:absolute;top:763.61px;font-size:21.3px;line-height:21.3px;color:#1e1e1e;font-weight:400;white-space:nowrap;letter-spacing:0.399px;right:485.70px;margin-right:-0.399px;">300.00</div>
<div style="position:absolute;top:763.61px;font-size:21.3px;line-height:21.3px;color:#1e1e1e;font-weight:400;white-space:nowrap;letter-spacing:0.399px;right:347.00px;margin-right:-0.399px;">300.00</div>
<div style="position:absolute;top:796.03px;font-size:21.3px;line-height:21.3px;color:#1e1e1e;font-weight:400;white-space:nowrap;letter-spacing:0.386px;left:317.79px;">Curabitur Corporation</div>
<div style="position:absolute;top:796.03px;font-size:21.3px;line-height:21.3px;color:#1e1e1e;font-weight:400;white-space:nowrap;letter-spacing:1.061px;left:578.04px;">03/13/15</div>
<div style="position:absolute;top:796.03px;font-size:21.3px;line-height:21.3px;color:#1e1e1e;font-weight:400;white-space:nowrap;letter-spacing:0.353px;left:695.00px;">Project management</div>
<div style="position:absolute;top:796.03px;font-size:21.3px;line-height:21.3px;color:#1e1e1e;font-weight:400;white-space:nowrap;letter-spacing:0.412px;left:1426.70px;">Project Management</div>
<div style="position:absolute;top:796.03px;font-size:21.3px;line-height:21.3px;color:#1e1e1e;font-weight:400;white-space:nowrap;letter-spacing:0.662px;right:624.30px;margin-right:-0.662px;">3.00</div>
<div style="position:absolute;top:796.03px;font-size:21.3px;line-height:21.3px;color:#1e1e1e;font-weight:400;white-space:nowrap;letter-spacing:0.399px;right:485.70px;margin-right:-0.399px;">300.00</div>
<div style="position:absolute;top:796.03px;font-size:21.3px;line-height:21.3px;color:#1e1e1e;font-weight:400;white-space:nowrap;letter-spacing:0.399px;right:347.00px;margin-right:-0.399px;">900.00</div>
<div style="position:absolute;top:828.45px;font-size:21.3px;line-height:21.3px;color:#1e1e1e;font-weight:400;white-space:nowrap;letter-spacing:0.386px;left:317.79px;">Curabitur Corporation</div>
<div style="position:absolute;top:828.45px;font-size:21.3px;line-height:21.3px;color:#1e1e1e;font-weight:400;white-space:nowrap;letter-spacing:1.061px;left:578.04px;">03/20/15</div>
<div style="position:absolute;top:828.45px;font-size:21.3px;line-height:21.3px;color:#1e1e1e;font-weight:400;white-space:nowrap;letter-spacing:0.353px;left:695.00px;">Project management</div>
<div style="position:absolute;top:828.45px;font-size:21.3px;line-height:21.3px;color:#1e1e1e;font-weight:400;white-space:nowrap;letter-spacing:0.412px;left:1426.70px;">Project Management</div>
<div style="position:absolute;top:828.45px;font-size:21.3px;line-height:21.3px;color:#1e1e1e;font-weight:400;white-space:nowrap;letter-spacing:0.662px;right:624.30px;margin-right:-0.662px;">1.00</div>
<div style="position:absolute;top:828.45px;font-size:21.3px;line-height:21.3px;color:#1e1e1e;font-weight:400;white-space:nowrap;letter-spacing:0.399px;right:485.70px;margin-right:-0.399px;">300.00</div>
<div style="position:absolute;top:828.45px;font-size:21.3px;line-height:21.3px;color:#1e1e1e;font-weight:400;white-space:nowrap;letter-spacing:0.399px;right:347.00px;margin-right:-0.399px;">300.00</div>
<div style="position:absolute;top:860.87px;font-size:21.3px;line-height:21.3px;color:#1e1e1e;font-weight:400;white-space:nowrap;letter-spacing:0.386px;left:317.79px;">Curabitur Corporation</div>
<div style="position:absolute;top:860.87px;font-size:21.3px;line-height:21.3px;color:#1e1e1e;font-weight:400;white-space:nowrap;letter-spacing:1.061px;left:578.04px;">03/27/15</div>
<div style="position:absolute;top:860.87px;font-size:21.3px;line-height:21.3px;color:#1e1e1e;font-weight:400;white-space:nowrap;letter-spacing:0.353px;left:695.00px;">Project management</div>
<div style="position:absolute;top:860.87px;font-size:21.3px;line-height:21.3px;color:#1e1e1e;font-weight:400;white-space:nowrap;letter-spacing:0.412px;left:1426.70px;">Project Management</div>
<div style="position:absolute;top:860.87px;font-size:21.3px;line-height:21.3px;color:#1e1e1e;font-weight:400;white-space:nowrap;letter-spacing:0.662px;right:624.30px;margin-right:-0.662px;">1.00</div>
<div style="position:absolute;top:860.87px;font-size:21.3px;line-height:21.3px;color:#1e1e1e;font-weight:400;white-space:nowrap;letter-spacing:0.399px;right:485.70px;margin-right:-0.399px;">300.00</div>
<div style="position:absolute;top:860.87px;font-size:21.3px;line-height:21.3px;color:#1e1e1e;font-weight:400;white-space:nowrap;letter-spacing:0.399px;right:347.00px;margin-right:-0.399px;">300.00</div>
<div style="position:absolute;top:893.29px;font-size:21.3px;line-height:21.3px;color:#1e1e1e;font-weight:400;white-space:nowrap;letter-spacing:0.386px;left:317.79px;">Curabitur Corporation</div>
<div style="position:absolute;top:893.29px;font-size:21.3px;line-height:21.3px;color:#1e1e1e;font-weight:400;white-space:nowrap;letter-spacing:1.061px;left:578.04px;">04/03/15</div>
<div style="position:absolute;top:893.29px;font-size:21.3px;line-height:21.3px;color:#1e1e1e;font-weight:400;white-space:nowrap;letter-spacing:0.353px;left:695.00px;">Project management</div>
<div style="position:absolute;top:893.29px;font-size:21.3px;line-height:21.3px;color:#1e1e1e;font-weight:400;white-space:nowrap;letter-spacing:0.412px;left:1426.70px;">Project Management</div>
<div style="position:absolute;top:893.29px;font-size:21.3px;line-height:21.3px;color:#1e1e1e;font-weight:400;white-space:nowrap;letter-spacing:0.662px;right:624.30px;margin-right:-0.662px;">1.00</div>
<div style="position:absolute;top:893.29px;font-size:21.3px;line-height:21.3px;color:#1e1e1e;font-weight:400;white-space:nowrap;letter-spacing:0.399px;right:485.70px;margin-right:-0.399px;">300.00</div>
<div style="position:absolute;top:893.29px;font-size:21.3px;line-height:21.3px;color:#1e1e1e;font-weight:400;white-space:nowrap;letter-spacing:0.399px;right:347.00px;margin-right:-0.399px;">300.00</div>
<div style="position:absolute;left:316.40px;top:917.04px;width:1899.60px;height:32.42px;background:#eeece1;"></div>
<div style="position:absolute;left:1829.50px;top:916.04px;width:386.50px;height:1.80px;background:#222;"></div>
<div style="position:absolute;top:925.71px;font-size:21.3px;line-height:21.3px;color:#262626;font-weight:400;white-space:nowrap;letter-spacing:0.125px;font-style:italic;left:318.32px;">Total Consulting</div>
<div style="position:absolute;top:925.71px;font-size:21.3px;line-height:21.3px;color:#262626;font-weight:400;white-space:nowrap;letter-spacing:0.310px;font-style:italic;right:624.30px;margin-right:-0.310px;">17.50</div>
<div style="position:absolute;top:925.71px;font-size:21.3px;line-height:21.3px;color:#262626;font-weight:400;white-space:nowrap;letter-spacing:0.399px;font-style:italic;right:485.70px;margin-right:-0.399px;">300.00</div>
<div style="position:absolute;top:925.71px;font-size:21.3px;line-height:21.3px;color:#262626;font-weight:400;white-space:nowrap;letter-spacing:0.526px;font-style:italic;right:347.00px;margin-right:-0.526px;">5,250.00</div>
<div style="position:absolute;left:316.40px;top:981.88px;width:1899.60px;height:32.42px;background:#eeece1;"></div>
<div style="position:absolute;left:2079.40px;top:980.88px;width:136.60px;height:1.80px;background:#222;"></div>
<div style="position:absolute;top:990.55px;font-size:21.3px;line-height:21.3px;color:#262626;font-weight:400;white-space:nowrap;letter-spacing:-0.270px;font-style:italic;left:318.32px;">Total Expenses</div>
<div style="position:absolute;top:990.55px;font-size:21.3px;line-height:21.3px;color:#262626;font-weight:400;white-space:nowrap;letter-spacing:0.962px;font-style:italic;right:347.00px;margin-right:-0.962px;">0.00</div>
<div style="position:absolute;left:316.40px;top:1046.72px;width:1899.60px;height:32.42px;background:#d8e4bc;"></div>
<div style="position:absolute;left:2079.40px;top:1045.72px;width:136.60px;height:1.80px;background:#222;"></div>
<div style="position:absolute;top:1055.39px;font-size:21.3px;line-height:21.3px;color:#262626;font-weight:400;white-space:nowrap;letter-spacing:-0.044px;font-style:italic;left:318.32px;">Total Jorge Narveson</div>
<div style="position:absolute;top:1055.39px;font-size:21.3px;line-height:21.3px;color:#262626;font-weight:400;white-space:nowrap;letter-spacing:0.526px;font-style:italic;right:347.00px;margin-right:-0.526px;">5,250.00</div>
<div style="position:absolute;left:316.40px;top:1111.06px;width:1899.60px;height:96.56px;background:#b8cce4;"></div>
<div style="position:absolute;left:314.00px;top:1207.62px;width:1904.50px;height:1.80px;background:#222;"></div>
<div style="position:absolute;left:1829.50px;top:1174.80px;width:386.50px;height:2.00px;background:#222;"></div>
<div style="position:absolute;top:1120.23px;font-size:21.3px;line-height:21.3px;color:#141414;font-weight:700;white-space:nowrap;letter-spacing:-0.409px;left:318.32px;">Total Consulting Curabitur Corporation</div>
<div style="position:absolute;top:1120.23px;font-size:21.3px;line-height:21.3px;color:#141414;font-weight:700;white-space:nowrap;letter-spacing:0.559px;right:624.30px;margin-right:-0.559px;">209.00</div>
<div style="position:absolute;top:1120.23px;font-size:21.3px;line-height:21.3px;color:#141414;font-weight:700;white-space:nowrap;letter-spacing:0.439px;right:485.70px;margin-right:-0.439px;">300.00</div>
<div style="position:absolute;top:1120.23px;font-size:21.3px;line-height:21.3px;color:#141414;font-weight:700;white-space:nowrap;letter-spacing:0.398px;right:347.00px;margin-right:-0.398px;">62,700.00</div>
<div style="position:absolute;top:1152.65px;font-size:21.3px;line-height:21.3px;color:#141414;font-weight:700;white-space:nowrap;letter-spacing:-0.485px;left:318.32px;">Total Expenses Curabitur Corporation</div>
<div style="position:absolute;top:1152.65px;font-size:21.3px;line-height:21.3px;color:#141414;font-weight:700;white-space:nowrap;letter-spacing:0.533px;right:347.00px;margin-right:-0.533px;">1,912.56</div>
<div style="position:absolute;top:1185.07px;font-size:21.3px;line-height:21.3px;color:#141414;font-weight:700;white-space:nowrap;letter-spacing:-0.316px;left:318.32px;">Total Curabitur Corporation</div>
<div style="position:absolute;top:1185.07px;font-size:21.3px;line-height:21.3px;color:#141414;font-weight:700;white-space:nowrap;letter-spacing:0.559px;right:624.30px;margin-right:-0.559px;">209.00</div>
<div style="position:absolute;top:1185.07px;font-size:21.3px;line-height:21.3px;color:#141414;font-weight:700;white-space:nowrap;letter-spacing:0.398px;right:347.00px;margin-right:-0.398px;">64,612.56</div>
<div style="position:absolute;left:312.60px;top:1239.24px;width:1906.90px;height:99.46px;background:#ddd9c4;border:3.3px solid #111;box-sizing:border-box;"></div>
<div style="position:absolute;left:1829.50px;top:1304.48px;width:386.50px;height:2.00px;background:#222;"></div>
<div style="position:absolute;top:1249.91px;font-size:21.3px;line-height:21.3px;color:#141414;font-weight:700;white-space:nowrap;letter-spacing:-0.384px;left:317.79px;">Grand Total Consulting for LAMQUO001</div>
<div style="position:absolute;top:1249.91px;font-size:21.3px;line-height:21.3px;color:#141414;font-weight:700;white-space:nowrap;letter-spacing:0.559px;right:624.30px;margin-right:-0.559px;">209.00</div>
<div style="position:absolute;top:1249.91px;font-size:21.3px;line-height:21.3px;color:#141414;font-weight:700;white-space:nowrap;letter-spacing:0.439px;right:485.70px;margin-right:-0.439px;">300.00</div>
<div style="position:absolute;top:1249.91px;font-size:21.3px;line-height:21.3px;color:#141414;font-weight:700;white-space:nowrap;letter-spacing:0.398px;right:347.00px;margin-right:-0.398px;">62,700.00</div>
<div style="position:absolute;top:1282.33px;font-size:21.3px;line-height:21.3px;color:#141414;font-weight:700;white-space:nowrap;letter-spacing:-0.454px;left:317.79px;">Grand Total Expenses for LAMQUO001</div>
<div style="position:absolute;top:1282.33px;font-size:21.3px;line-height:21.3px;color:#141414;font-weight:700;white-space:nowrap;letter-spacing:0.533px;right:347.00px;margin-right:-0.533px;">1,912.56</div>
<div style="position:absolute;top:1314.75px;font-size:21.3px;line-height:21.3px;color:#141414;font-weight:700;white-space:nowrap;letter-spacing:-0.272px;left:317.79px;">Grand Total for LAMQUO001</div>
<div style="position:absolute;top:1314.75px;font-size:21.3px;line-height:21.3px;color:#141414;font-weight:700;white-space:nowrap;letter-spacing:0.559px;right:624.30px;margin-right:-0.559px;">209.00</div>
<div style="position:absolute;top:1314.75px;font-size:21.3px;line-height:21.3px;color:#141414;font-weight:700;white-space:nowrap;letter-spacing:0.398px;right:347.00px;margin-right:-0.398px;">64,612.56</div>
</div>
<div id="frame"></div>
</body></html>
